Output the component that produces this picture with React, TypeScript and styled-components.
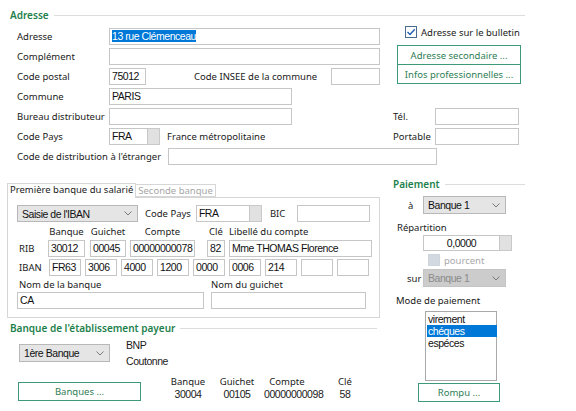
import styled, { createGlobalStyle } from "styled-components";

const GlobalStyle = createGlobalStyle`
  html, body {
    margin: 0;
    padding: 0;
    background: #ffffff;
  }
  body {
    font-family: "Noto Sans", "Liberation Sans", sans-serif;
    font-size: 9.5px;
    color: #1a1a1a;
  }
`;

const GREEN = "#1d7f4c";
const BORDER = "#c6c6c6";
const VALUE_FONT = `"Liberation Sans", Arial, sans-serif`;

const Page = styled.div`
  width: 569px;
  padding: 9px 0 0 7px;
`;

const GroupTitle = styled.div<{ $w: number; $ml?: number }>`
  display: flex;
  align-items: center;
  gap: 5px;
  width: ${({ $w }) => $w}px;
  height: 12px;
  margin-left: ${({ $ml }) => $ml ?? 3}px;
  color: ${GREEN};
  font-weight: 600;
  font-size: 10px;
  white-space: nowrap;

  &::after {
    content: "";
    flex: 1;
    height: 1px;
    background: #dcdcdc;
  }
`;

const AddressBody = styled.div`
  margin: 6px 0 0 10px;
`;

const Columns = styled.div`
  display: flex;
  align-items: flex-start;
`;

const LeftFields = styled.div`
  width: 363px;
`;

const Row = styled.div<{ $h?: number; $mt?: number; $pl?: number }>`
  display: flex;
  align-items: center;
  height: ${({ $h }) => $h ?? 18}px;
  margin-top: ${({ $mt }) => $mt ?? 0}px;
  margin-bottom: 2px;
  padding-left: ${({ $pl }) => $pl ?? 0}px;
  white-space: nowrap;
`;

const Label = styled.span<{ $w?: number; $ml?: number; $pl?: number }>`
  display: inline-block;
  flex: none;
  box-sizing: border-box;
  width: ${({ $w }) => ($w ? `${$w}px` : "auto")};
  margin-left: ${({ $ml }) => $ml ?? 0}px;
  padding-left: ${({ $pl }) => $pl ?? 0}px;
`;

const Field = styled.div<{ $w: number; $h?: number; $ml?: number; $center?: boolean }>`
  flex: none;
  box-sizing: border-box;
  width: ${({ $w }) => $w}px;
  height: ${({ $h }) => $h ?? 17}px;
  margin-left: ${({ $ml }) => $ml ?? 0}px;
  border: 1px solid ${BORDER};
  background: #fff;
  padding: 0 2px;
  font-family: ${VALUE_FONT};
  font-size: 10.5px;
  letter-spacing: -0.45px;
  line-height: ${({ $h }) => ($h ?? 17) - 2}px;
  text-align: ${({ $center }) => ($center ? "center" : "left")};
  color: #111;
  overflow: hidden;
  white-space: nowrap;
`;

const Selected = styled.span`
  background: #0078d7;
  color: #fff;
`;

const EllipsisButton = styled.div<{ $h?: number }>`
  flex: none;
  box-sizing: border-box;
  width: 12px;
  height: ${({ $h }) => $h ?? 17}px;
  background: #e1e1e1;
  border: 1px solid #c9c9c9;
  border-left: none;
  color: #9a9a9a;
  font-size: 7px;
  line-height: ${({ $h }) => ($h ?? 17) - 6}px;
  text-align: center;
`;

const Combo = styled.div<{ $w: number; $h?: number; $disabled?: boolean }>`
  flex: none;
  box-sizing: border-box;
  display: flex;
  align-items: center;
  justify-content: space-between;
  width: ${({ $w }) => $w}px;
  height: ${({ $h }) => $h ?? 18}px;
  padding: 0 5px 0 4px;
  background: ${({ $disabled }) => ($disabled ? "#cccccc" : "#e5e5e5")};
  border: 1px solid ${({ $disabled }) => ($disabled ? "#c4c4c4" : "#b8b8b8")};
  color: ${({ $disabled }) => ($disabled ? "#8a8a8a" : "#111")};
  font-family: ${VALUE_FONT};
  font-size: 10.5px;
  letter-spacing: -0.45px;
`;

const Chevron = () => (
  <svg width="8" height="5" viewBox="0 0 8 5">
    <path d="M0.5 0.5 L4 4 L7.5 0.5" fill="none" stroke="#7a7a7a" strokeWidth="1" />
  </svg>
);

const RightColumn = styled.div`
  display: flex;
  flex-direction: column;
  margin: -2px 0 0 13px;
  width: 128px;
`;

const CheckRow = styled.div<{ $pl: number; $muted?: boolean }>`
  display: flex;
  align-items: center;
  gap: 4px;
  height: 14px;
  padding-left: ${({ $pl }) => $pl}px;
  color: ${({ $muted }) => ($muted ? "#a8a8a8" : "#1a1a1a")};
  white-space: nowrap;
`;

const Box = styled.div<{ $disabled?: boolean }>`
  box-sizing: border-box;
  width: 12px;
  height: 12px;
  border: 1px solid ${({ $disabled }) => ($disabled ? "#cfd5dc" : "#4a6a8e")};
  background: ${({ $disabled }) => ($disabled ? "#d3d9e0" : "#fff")};
  display: flex;
  align-items: center;
  justify-content: center;
`;

const GreenButton = styled.div<{ $w: number; $h?: number; $ml?: number; $mt?: number }>`
  box-sizing: border-box;
  flex: none;
  width: ${({ $w }) => $w}px;
  height: ${({ $h }) => $h ?? 20}px;
  margin-left: ${({ $ml }) => $ml ?? 0}px;
  margin-top: ${({ $mt }) => $mt ?? 0}px;
  border: 1px solid #3d9a78;
  background: #fff;
  color: #2f7d55;
  font-size: 9.5px;
  display: flex;
  align-items: center;
  justify-content: center;
  white-space: nowrap;
`;

const BottomArea = styled.div`
  display: flex;
  align-items: flex-start;
  margin-top: 18px;
`;

const LeftBottom = styled.div`
  width: 373px;
`;

const TabStrip = styled.div`
  display: flex;
  align-items: flex-end;
  height: 14px;
  position: relative;
  z-index: 1;
`;

const Tab = styled.div<{ $active?: boolean }>`
  box-sizing: border-box;
  height: ${({ $active }) => ($active ? 15 : 13)}px;
  margin-bottom: ${({ $active }) => ($active ? -1 : 0)}px;
  padding: 0 2px;
  border: 1px solid #d6d6d6;
  border-bottom: ${({ $active }) => ($active ? "none" : "1px solid #d6d6d6")};
  border-left: ${({ $active }) => ($active ? "1px solid #d6d6d6" : "none")};
  background: #fff;
  color: ${({ $active }) => ($active ? "#1a1a1a" : "#a6a6a6")};
  line-height: 12px;
  white-space: nowrap;
`;

const TabPanel = styled.div`
  box-sizing: border-box;
  height: 121px;
  border: 1px solid #d6d6d6;
  padding: 7px 0 0 9px;
`;

const BankGrid = styled.div<{ $h?: number }>`
  display: grid;
  grid-template-columns: 31px 42px 40px 77px 22px 143px;
  align-items: center;
  height: ${({ $h }) => ($h ? `${$h}px` : "auto")};
`;

const ColHead = styled.span<{ $w: number; $left?: boolean }>`
  width: ${({ $w }) => $w}px;
  text-align: ${({ $left }) => ($left ? "left" : "center")};
  white-space: nowrap;
`;

const TwoCols = styled.div<{ $h?: number; $mt?: number }>`
  display: grid;
  grid-template-columns: 194px 155px;
  align-items: center;
  height: ${({ $h }) => ($h ? `${$h}px` : "auto")};
  margin-top: ${({ $mt }) => $mt ?? 0}px;
`;

const PayerRow = styled.div`
  display: flex;
  align-items: center;
  margin: 3px 0 0 12px;
`;

const BankInfo = styled.div`
  margin-left: 16px;
  font-family: ${VALUE_FONT};
  font-size: 10.5px;
  letter-spacing: -0.45px;
  line-height: 16px;
`;

const PayerBottom = styled.div`
  display: flex;
  align-items: flex-end;
  margin: 6px 0 0 11px;
`;

const Details = styled.div`
  display: grid;
  grid-template-columns: 44px 54px 46px 70px;
  margin-left: 25px;
  line-height: 13px;
  text-align: center;
`;

const DetailValue = styled.span`
  font-family: ${VALUE_FONT};
  font-size: 10.5px;
  letter-spacing: -0.45px;
`;

const Payment = styled.div`
  display: flex;
  flex-direction: column;
  margin: -5px 0 0 13px;
  width: 132px;
`;

const ListBox = styled.div`
  box-sizing: border-box;
  width: 72px;
  height: 70px;
  margin: 3px 0 0 32px;
  border: 1px solid #a9a9a9;
  padding: 1px 0 0 1px;
  font-family: ${VALUE_FONT};
  font-size: 10.5px;
  letter-spacing: -0.45px;
  line-height: 12px;
`;

const ListItem = styled.div<{ $selected?: boolean }>`
  padding-left: 1px;
  width: 69px;
  background: ${({ $selected }) => ($selected ? "#0078d7" : "transparent")};
  color: ${({ $selected }) => ($selected ? "#fff" : "#111")};
`;

const iban = ["FR63", "3006", "4000", "1200", "0000", "0006", "214", "", ""];

export default function App() {
  return (
    <Page>
      <GlobalStyle />
      <GroupTitle $w={515}>Adresse</GroupTitle>
      <AddressBody>
        <Columns>
          <LeftFields>
            <Row>
              <Label $w={92}>Adresse</Label>
              <Field $w={271}>
                <Selected>13 rue Clémenceau</Selected>
              </Field>
            </Row>
            <Row>
              <Label $w={92}>Complément</Label>
              <Field $w={271} />
            </Row>
            <Row>
              <Label $w={92}>Code postal</Label>
              <Field $w={37}>75012</Field>
              <Label $ml={48}>Code INSEE de la commune</Label>
              <Field $w={49} $ml={14} />
            </Row>
            <Row>
              <Label $w={92}>Commune</Label>
              <Field $w={183}>PARIS</Field>
            </Row>
            <Row>
              <Label $w={92}>Bureau distributeur</Label>
              <Field $w={183} />
            </Row>
            <Row>
              <Label $w={92}>Code Pays</Label>
              <Field $w={39}>FRA</Field>
              <EllipsisButton />
              <Label $ml={7}>France métropolitaine</Label>
            </Row>
          </LeftFields>
          <RightColumn>
            <CheckRow $pl={12}>
              <Box>
                <svg width="10" height="10" viewBox="0 0 10 10">
                  <path d="M1.5 5 L4 7.5 L8.8 2.2" fill="none" stroke="#1f5fb0" strokeWidth="1.4" />
                </svg>
              </Box>
              Adresse sur le bulletin
            </CheckRow>
            <GreenButton $w={124} $ml={4} $mt={6}>
              Adresse secondaire ...
            </GreenButton>
            <GreenButton $w={124} $ml={4} $mt={-1}>
              Infos professionnelles ...
            </GreenButton>
            <Row $mt={23}>
              <Label $w={42}>Tél.</Label>
              <Field $w={84} />
            </Row>
            <Row>
              <Label $w={42}>Portable</Label>
              <Field $w={84} />
            </Row>
          </RightColumn>
        </Columns>
        <Row>
          <Label $w={151}>Code de distribution à l'étranger</Label>
          <Field $w={269} />
        </Row>
      </AddressBody>

      <BottomArea>
        <LeftBottom>
          <TabStrip>
            <Tab $active>Première banque du salarié</Tab>
            <Tab>Seconde banque</Tab>
          </TabStrip>
          <TabPanel>
            <Row $h={17}>
              <Combo $w={121} $h={17}>
                Saisie de l'IBAN
                <Chevron />
              </Combo>
              <Label $ml={7}>Code Pays</Label>
              <Field $w={54} $ml={5}>
                FRA
              </Field>
              <EllipsisButton />
              <Label $ml={8}>BIC</Label>
              <Field $w={73} $ml={12} />
            </Row>
            <BankGrid $h={14}>
              <span />
              <ColHead $w={37}>Banque</ColHead>
              <ColHead $w={36}>Guichet</ColHead>
              <ColHead $w={65}>Compte</ColHead>
              <ColHead $w={18}>Clé</ColHead>
              <ColHead $w={143} $left>
                Libellé du compte
              </ColHead>
            </BankGrid>
            <Row $h={17} $mt={2}>
              <BankGrid>
                <Label $pl={2}>RIB</Label>
                <Field $w={37}>30012</Field>
                <Field $w={36}>00045</Field>
                <Field $w={65}>00000000078</Field>
                <Field $w={18}>82</Field>
                <Field $w={143}>Mme THOMAS Florence</Field>
              </BankGrid>
            </Row>
            <Row $h={17}>
              <Label $w={32} $pl={2}>
                IBAN
              </Label>
              {iban.map((v, i) => (
                <Field key={i} $w={32} $ml={i === 0 ? 0 : 4}>
                  {v}
                </Field>
              ))}
            </Row>
            <TwoCols $h={12}>
              <Label $pl={2}>Nom de la banque</Label>
              <Label>Nom du guichet</Label>
            </TwoCols>
            <TwoCols $mt={2}>
              <Field $w={187}>CA</Field>
              <Field $w={155} />
            </TwoCols>
          </TabPanel>

          <GroupTitle $w={367} style={{ marginTop: 4 }}>
            Banque de l'établissement payeur
          </GroupTitle>
          <PayerRow>
            <Combo $w={91}>
              1ère Banque
              <Chevron />
            </Combo>
            <BankInfo>
              BNP
              <br />
              Coutonne
            </BankInfo>
          </PayerRow>
          <PayerBottom>
            <GreenButton $w={123} $h={19}>
              Banques ...
            </GreenButton>
            <Details>
              <span>Banque</span>
              <span>Guichet</span>
              <span>Compte</span>
              <span>Clé</span>
              <DetailValue>30004</DetailValue>
              <DetailValue>00105</DetailValue>
              <DetailValue>00000000098</DetailValue>
              <DetailValue>58</DetailValue>
            </Details>
          </PayerBottom>
        </LeftBottom>

        <Payment>
          <GroupTitle $w={132} $ml={0}>
            Paiement
          </GroupTitle>
          <Row $mt={6}>
            <Label $w={30} $pl={15}>
              à
            </Label>
            <Combo $w={83}>
              Banque 1
              <Chevron />
            </Combo>
          </Row>
          <Row $h={12} $mt={5} $pl={4}>
            Répartition
          </Row>
          <Row $h={16} $pl={30}>
            <Field $w={77} $h={16} $center>
              0,0000
            </Field>
            <EllipsisButton $h={16} />
          </Row>
          <CheckRow $pl={35} $muted>
            <Box $disabled />
            pourcent
          </CheckRow>
          <Row $mt={2}>
            <Label $w={30} $pl={14}>
              sur
            </Label>
            <Combo $w={83} $disabled>
              Banque 1
              <Chevron />
            </Combo>
          </Row>
          <Row $h={12} $mt={5} $pl={3}>
            Mode de paiement
          </Row>
          <ListBox>
            <ListItem>virement</ListItem>
            <ListItem $selected>chéques</ListItem>
            <ListItem>espéces</ListItem>
          </ListBox>
          <GreenButton $w={82} $h={19} $ml={25} $mt={2}>
            Rompu ...
          </GreenButton>
        </Payment>
      </BottomArea>
    </Page>
  );
}
